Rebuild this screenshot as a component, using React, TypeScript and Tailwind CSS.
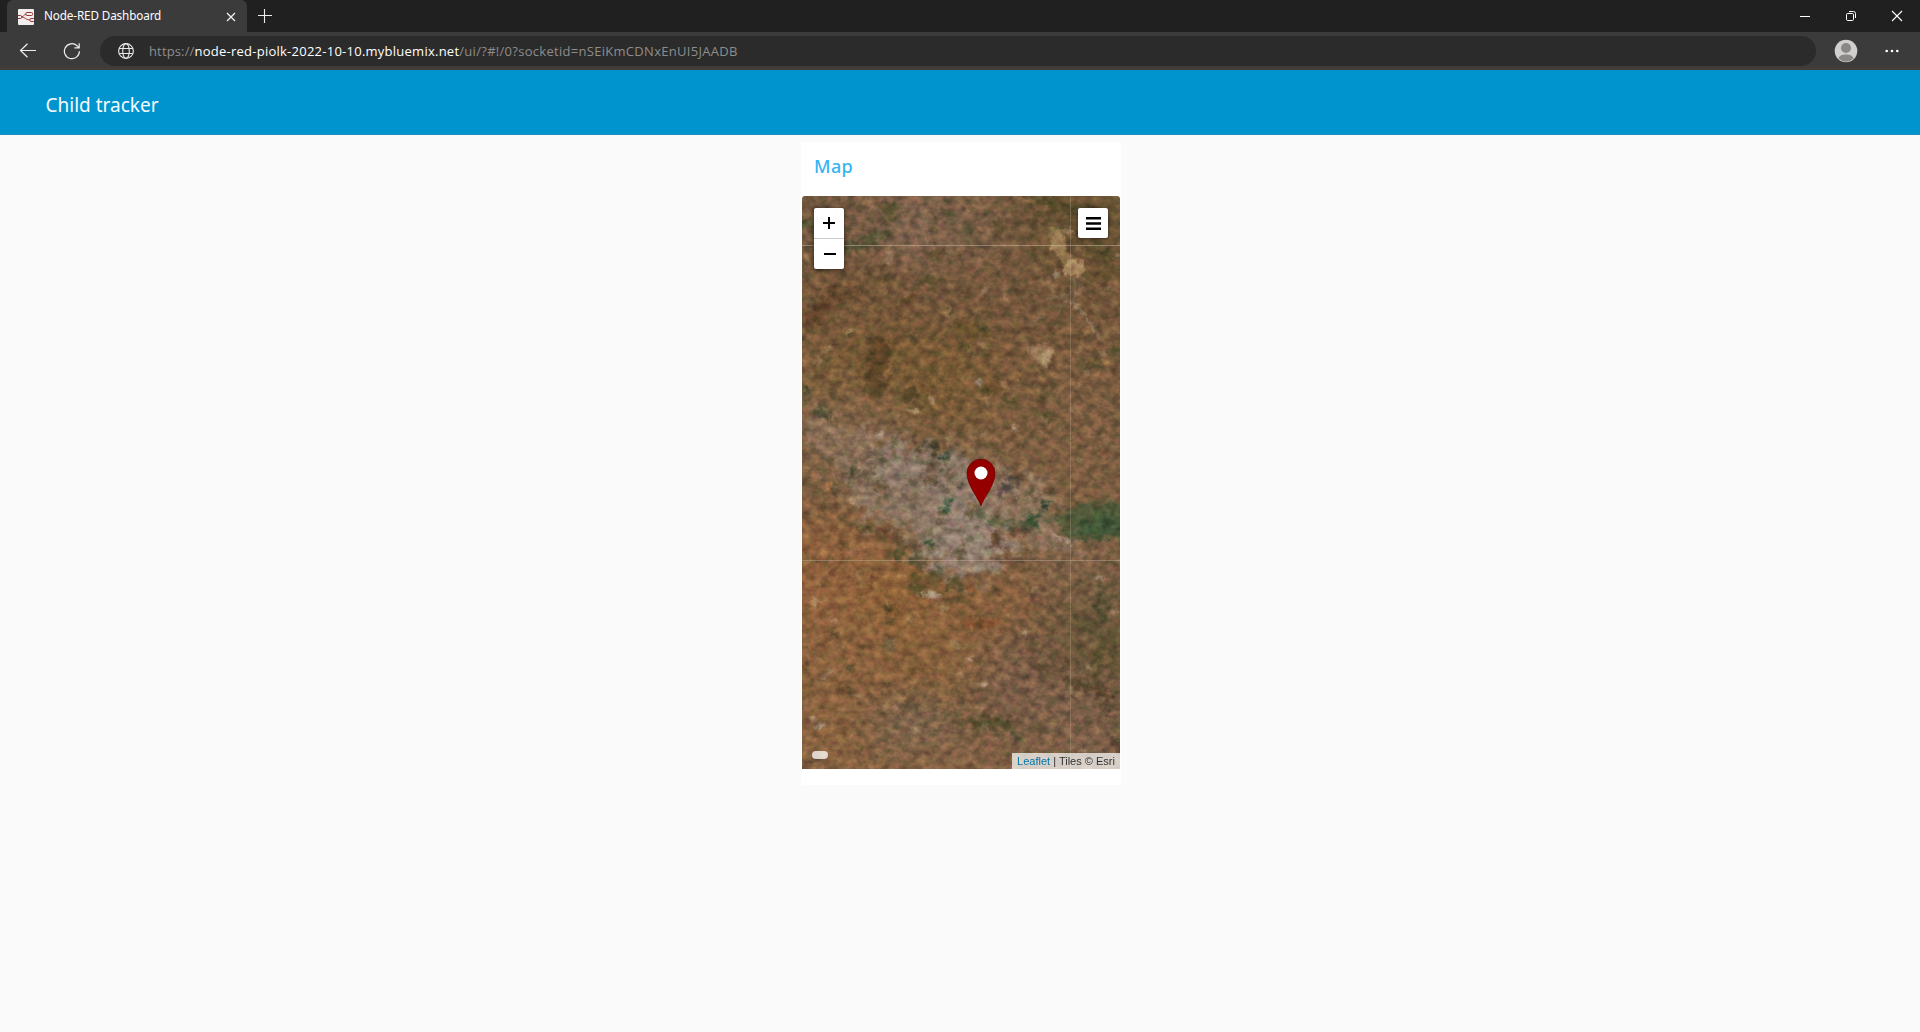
type Patch = [number, number, number, number, string, number, number?];

const BASE: Patch[] = [
  [40, 20, 90, 50, '#73573c', 0.9],
  [120, 30, 60, 50, '#81634a', 0.9],
  [190, 20, 60, 40, '#7b5d42', 0.8],
  [270, 20, 60, 60, '#68512f', 0.9],
  [60, 110, 80, 50, '#745433', 0.8],
  [180, 110, 80, 50, '#755537', 0.9],
  [285, 120, 50, 60, '#735435', 0.9],
  [120, 180, 120, 50, '#79592f', 0.9],
  [250, 190, 80, 50, '#7d5a39', 0.8],
  [50, 230, 60, 40, '#836343', 0.8],
  [280, 240, 60, 60, '#7d5c3d', 0.9],
  [30, 400, 80, 80, '#925f37', 0.95],
  [110, 430, 70, 70, '#926234', 0.95],
  [190, 420, 70, 50, '#8b5e38', 0.9],
  [40, 500, 70, 80, '#8c5f38', 0.9],
  [160, 470, 60, 40, '#8a6139', 0.9],
  [230, 500, 60, 70, '#7a5b43', 0.9],
  [290, 540, 60, 50, '#7c5d44', 0.9],
  [290, 430, 50, 60, '#6f5839', 0.9],
  [110, 530, 45, 30, '#786148', 0.9],
  [100, 565, 90, 16, '#91653e', 0.8],
  [190, 556, 60, 18, '#8a6243', 0.8],
  [280, 370, 60, 26, '#7f5f43', 0.8],
];

const CITY: Patch[] = [
  [80, 268, 60, 28, '#8e7660', 0.8, 15],
  [130, 292, 74, 42, '#8e7a68', 0.9, 10],
  [152, 336, 46, 38, '#94806e', 0.95, 15],
  [96, 312, 50, 22, '#8f765e', 0.8, 15],
  [212, 304, 44, 26, '#91765c', 0.8, 10],
  [172, 352, 42, 22, '#96816f', 0.95],
  [158, 380, 34, 8, '#8a7054', 0.6],
  [42, 252, 34, 14, '#8c6d51', 0.7, 30],
  [14, 230, 20, 14, '#987a60', 0.6, 40],
  [250, 342, 30, 12, '#967b64', 0.7, 15],
];

const DETAIL: Patch[] = [
  [88, 14, 9, 14, '#454822', 0.6, 25],
  [70, 44, 22, 6, '#434b2a', 0.65, -28],
  [38, 53, 28, 4, '#3b472c', 0.65, -8],
  [142, 17, 5, 11, '#4b4729', 0.6, 30],
  [166, 38, 12, 6, '#4e5030', 0.55, 55],
  [135, 58, 10, 6, '#5b4527', 0.6, -25],
  [200, 30, 7, 7, '#5a4424', 0.6],
  [4, 30, 7, 6, '#3b4b2a', 0.6],
  [255, 10, 25, 4, '#42401d', 0.7, 10],
  [300, 58, 15, 7, '#504724', 0.7, 35],
  [294, 78, 26, 7, '#57451f', 0.5, 0],
  [18, 115, 8, 22, '#5f3d22', 0.7, 40],
  [45, 98, 18, 5, '#5b4024', 0.65, -10],
  [105, 106, 14, 4, '#583e20', 0.6, -30],
  [85, 84, 22, 3, '#534821', 0.5, 8],
  [128, 86, 14, 4, '#49491d', 0.6, 10],
  [170, 135, 20, 8, '#614c22', 0.6, 20],
  [76, 172, 13, 32, '#523c1e', 0.65, 5],
  [80, 150, 10, 8, '#5d4321', 0.6],
  [110, 198, 10, 7, '#4a3e21', 0.8, -25],
  [22, 217, 12, 4, '#38452a', 0.75, 35],
  [3, 196, 4, 6, '#2c4225', 0.8],
  [190, 192, 12, 5, '#62471f', 0.6],
  [206, 205, 5, 4, '#3f4d20', 0.7],
  [244, 220, 14, 3, '#44491f', 0.6, 25],
  [246, 196, 14, 3, '#4a5428', 0.5, -45],
  [290, 168, 8, 5, '#474c23', 0.7],
  [314, 156, 8, 5, '#3e4a22', 0.7],
  [134, 251, 6, 7, '#463f27', 0.9],
  [117, 251, 6, 7, '#5a452b', 0.8],
  [142, 261, 4, 4, '#23402a', 0.9],
  [130, 272, 7, 5, '#655039', 0.9],
  [129, 284, 9, 5, '#5d4c34', 0.9],
  [148, 276, 5, 6, '#63503a', 0.8],
  [112, 285, 7, 4, '#65523b', 0.8],
  [50, 276, 4, 7, '#484a2b', 0.8],
  [62, 262, 6, 5, '#66523a', 0.7],
  [80, 263, 5, 5, '#5c5134', 0.7],
  [79, 293, 9, 6, '#635036', 0.85, 30],
  [84, 303, 6, 4, '#695540', 0.8],
  [66, 277, 8, 5, '#625039', 0.8],
  [100, 296, 5, 3, '#66533e', 0.7],
  [112, 308, 10, 4, '#6a5944', 0.6, -20],
  [210, 306, 6, 4, '#71503a', 0.7],
  [144, 310, 5, 7, '#34583a', 0.9],
  [170, 315, 6, 7, '#625135', 0.85],
  [206, 291, 13, 5, '#403a38', 0.7, -35],
  [192, 323, 2, 6, '#32542f', 0.9],
  [180, 318, 2, 8, '#365633', 0.7],
  [230, 325, 9, 9, '#2d4f30', 0.85],
  [244, 308, 5, 4, '#21432b', 0.95],
  [212, 329, 20, 2, '#36502d', 0.8, 3],
  [294, 325, 38, 19, '#435733', 0.8, -4],
  [302, 331, 28, 12, '#3a5532', 0.75, -4],
  [254, 321, 20, 2, '#3b5530', 0.7, 12],
  [310, 312, 12, 4, '#4b5f39', 0.7],
  [64, 332, 10, 3, '#46512a', 0.8, 15],
  [45, 326, 12, 2, '#5a5229', 0.6, 15],
  [86, 338, 12, 5, '#6c4529', 0.7],
  [95, 358, 7, 5, '#3c4b25', 0.85],
  [130, 347, 6, 4, '#35502e', 0.85],
  [106, 348, 13, 5, '#5b4c31', 0.7],
  [115, 363, 8, 8, '#535032', 0.8],
  [160, 355, 8, 4, '#56492f', 0.85],
  [194, 344, 6, 9, '#66452c', 0.8, 20],
  [216, 337, 14, 4, '#6b452b', 0.7],
  [208, 365, 16, 5, '#6c492e', 0.6],
  [136, 371, 3, 6, '#3b522d', 0.8],
  [115, 393, 13, 4, '#454823', 0.8, 15],
  [124, 384, 18, 8, '#5c4a26', 0.55],
  [152, 388, 9, 5, '#494523', 0.85],
  [160, 404, 7, 3, '#51571f', 0.7],
  [168, 394, 8, 3, '#7b461f', 0.7],
  [178, 428, 22, 5, '#764520', 0.6],
  [93, 416, 7, 5, '#6d4723', 0.7],
  [232, 400, 4, 8, '#5a3d36', 0.7],
  [300, 410, 6, 22, '#43482a', 0.6, 8],
  [290, 434, 28, 6, '#4c4a27', 0.5, 30],
  [297, 464, 4, 20, '#484721', 0.65, 12],
  [310, 460, 4, 26, '#4c4825', 0.5],
  [284, 490, 26, 4, '#483a21', 0.65, 15],
  [303, 500, 10, 3, '#3b2d1c', 0.75, 25],
  [308, 516, 6, 4, '#433427', 0.8],
  [240, 472, 14, 3, '#533d26', 0.6, 30],
  [258, 462, 5, 9, '#55402a', 0.5, -30],
  [225, 450, 5, 10, '#684531', 0.6],
  [192, 528, 24, 7, '#4b4823', 0.7, 4],
  [216, 541, 9, 5, '#4b522f', 0.65, 25],
  [172, 530, 6, 9, '#48441f', 0.5],
  [236, 531, 8, 3, '#4b4e25', 0.6],
  [40, 493, 8, 4, '#5f4926', 0.7, 35],
  [88, 448, 8, 6, '#5d5a3c', 0.6, 20],
  [30, 440, 3, 3, '#443c25', 0.9],
  [114, 473, 10, 4, '#6d4926', 0.6],
  [110, 504, 10, 6, '#5b4c30', 0.5],
  [316, 550, 6, 8, '#4c3728', 0.7],
];

const LIGHT: Patch[] = [
  [254, 39, 8, 7, '#a98456', 0.75],
  [256, 50, 7, 9, '#a98354', 0.75, -20],
  [265, 63, 6, 9, '#9d7c4c', 0.75, -30],
  [272, 72, 11, 8, '#af8a5b', 0.85],
  [265, 34, 6, 3, '#a3805c', 0.7],
  [280, 68, 3, 5, '#a28058', 0.8],
  [254, 79, 4, 2, '#ab927a', 0.8],
  [240, 157, 11, 9, '#b08a61', 0.75, 10],
  [233, 154, 8, 4, '#a28159', 0.7],
  [244, 164, 4, 7, '#b29369', 0.75],
  [48, 136, 6, 1.5, '#a59362', 0.8, -45],
  [27, 154, 6, 1.2, '#a59362', 0.7, -45],
  [146, 115, 2, 6, '#a68853', 0.7, 15],
  [112, 215, 8, 2, '#ac9165', 0.8, 8],
  [131, 204, 2, 4, '#ad9471', 0.7, -20],
  [177, 186, 3, 3, '#b6b0a0', 0.6],
  [212, 233, 2, 3, '#baa185', 0.8],
  [78, 238, 6, 3, '#b1967a', 0.7, -30],
  [130, 399, 11, 3, '#ad9880', 0.8, 3],
  [13, 406, 5, 4, '#c08e65', 0.9],
  [31, 425, 4, 3, '#b2825a', 0.8],
  [169, 463, 3, 2, '#c5a990', 0.7],
  [181, 488, 4, 2, '#ad9580', 0.7],
  [18, 530, 6, 3, '#ad957c', 0.8, -20],
  [11, 524, 4, 3, '#ad8b69', 0.8],
  [24, 478, 7, 3, '#a2835d', 0.7, -40],
  [298, 382, 5, 2, '#a59276', 0.7],
  [224, 438, 3, 4, '#a1806a', 0.7],
  [26, 291, 3, 5, '#bd7745', 0.8],
  [52, 306, 8, 3, '#aa8d6d', 0.6, 45],
  [258, 342, 10, 2.5, '#b39a85', 0.7, 20],
];

// Small scattered ground speckles, seeded so that every render is the same.
const SPECKLES: Patch[] = (() => {
  let s = 77;
  const rnd = () => (s = (s * 16807) % 2147483647) / 2147483647;
  const tones = ['#4c4a28', '#5b3f22', '#50502a', '#a98a66', '#9c7247', '#5a4a31', '#a87a48'];
  return Array.from({ length: 700 }, () => [
    rnd() * 318,
    rnd() * 573,
    1 + rnd() * 5,
    1 + rnd() * 3,
    tones[Math.floor(rnd() * tones.length)],
    0.2 + rnd() * 0.3,
    rnd() * 180,
  ] as Patch);
})();

function Patches({ items }: { items: Patch[] }) {
  return (
    <>
      {items.map(([x, y, rx, ry, fill, o, r = 0], i) => (
        <ellipse key={i} rx={rx} ry={ry} fill={fill} opacity={o} transform={`translate(${x} ${y}) rotate(${r})`} />
      ))}
    </>
  );
}

function SatelliteMap() {
  return (
    <svg width="318" height="573" viewBox="0 0 318 573" className="block">
      <defs>
        <filter id="soft" x="-20" y="-20" width="358" height="613" filterUnits="userSpaceOnUse" colorInterpolationFilters="sRGB">
          <feGaussianBlur stdDeviation="18" />
        </filter>
        <filter id="rough" x="-20" y="-20" width="358" height="613" filterUnits="userSpaceOnUse" colorInterpolationFilters="sRGB">
          <feGaussianBlur stdDeviation="2" result="b" />
          <feTurbulence type="fractalNoise" baseFrequency="0.14" numOctaves="4" seed="8" />
          <feDisplacementMap in="b" scale="17" xChannelSelector="R" yChannelSelector="G" />
        </filter>
        <filter id="city" x="-20" y="-20" width="358" height="613" filterUnits="userSpaceOnUse" colorInterpolationFilters="sRGB">
          <feGaussianBlur stdDeviation="7" result="b" />
          <feTurbulence type="fractalNoise" baseFrequency="0.09" numOctaves="4" seed="3" />
          <feDisplacementMap in="b" scale="55" xChannelSelector="R" yChannelSelector="G" />
        </filter>
        <filter id="fine" x="-20" y="-20" width="358" height="613" filterUnits="userSpaceOnUse" colorInterpolationFilters="sRGB">
          <feGaussianBlur stdDeviation="0.8" result="b" />
          <feTurbulence type="fractalNoise" baseFrequency="0.2" numOctaves="3" seed="5" />
          <feDisplacementMap in="b" scale="8" xChannelSelector="R" yChannelSelector="G" />
        </filter>
        <filter id="grain" x="0" y="0" width="318" height="573" filterUnits="userSpaceOnUse" colorInterpolationFilters="sRGB">
          <feTurbulence type="fractalNoise" baseFrequency="0.11 0.13" numOctaves="5" seed="21" />
          <feColorMatrix values="1.1 0.2 0 0 -0.14  0.8 0.5 0 0 -0.14  0.9 0.2 0.2 0 -0.12  0 0 0 0 1" />
        </filter>
      </defs>
      <g className="saturate-[0.9]">
        <rect width="318" height="573" fill="#7c5c3b" />
        <g filter="url(#soft)"><Patches items={BASE} /></g>
        <g filter="url(#city)"><Patches items={CITY} /></g>
        <g filter="url(#rough)"><Patches items={DETAIL} /></g>
        <g filter="url(#fine)">
          <Patches items={SPECKLES} />
          <Patches items={LIGHT} />
          <g fill="none" stroke="#9b8469" strokeWidth="1.6" opacity=".7">
            <path d="M267 103 L280 115 L290 130 L298 145" stroke="#a89577" strokeWidth="2" />
            <path d="M280 80 L278 94 L271 101 M273 82 L271 99 M245 102 L268 99 M268 103 L255 116" />
            <path d="M134 342 Q148 333 164 332 L186 322" stroke="#716050" strokeWidth="1.2" />
            <path d="M58 380 L95 356 M190 326 L230 332" stroke="#7b6a50" strokeWidth="1" />
          </g>
        </g>
        <rect width="318" height="573" filter="url(#grain)" className="mix-blend-overlay" opacity=".38" />
      </g>
      <path d="M0 49.5H318" stroke="#c9b9a3" opacity=".5" />
      <path d="M0 364.5H318" stroke="#c9b9a3" opacity=".4" />
      <path d="M268.5 0V573" stroke="#c0ac92" opacity=".3" />
      <path
        d="M179 309.7 C177 303 165 289 165 277.2 A14 14 0 0 1 193 277.2 C193 289 181 303 179 309.7Z"
        fill="#940000"
        stroke="#720000"
        strokeWidth=".8"
      />
      <circle cx="179" cy="277" r="6.5" fill="#fff" />
    </svg>
  );
}

function NodeRedIcon() {
  return (
    <svg width="16" height="16" viewBox="0 0 16 16" className="mt-px shrink-0">
      <rect width="16" height="16" rx="1" fill="#f3eeee" />
      <g fill="none" stroke="#97353a" strokeWidth="1">
        <rect x="8" y="3.5" width="6.5" height="3" rx="1" />
        <rect x="12" y="9.5" width="4.5" height="3" rx="1" />
        <rect x="-1" y="6.5" width="4.5" height="3" rx="1" />
        <path d="M3.5 8C6 8 6 5 8 5M3.5 8C7.5 8 7.5 11 12 11" />
      </g>
    </svg>
  );
}

function TabStrip() {
  return (
    <div className="flex h-8 bg-[#202020]">
      <div className="ml-[7px] flex w-60 items-center rounded-t-md bg-[#3b3b3b] pl-[11px] pr-[11px]">
        <NodeRedIcon />
        <span className="ml-[10px] whitespace-nowrap text-[11.7px] tracking-[-0.12px] text-white">Node-RED Dashboard</span>
        <svg width="10" height="10" viewBox="0 0 10 10" className="ml-auto mt-px" stroke="#f0f0f0" strokeWidth="1.3">
          <path d="M1 1l8 8M9 1l-8 8" />
        </svg>
      </div>
      <svg width="14" height="14" viewBox="0 0 14 14" className="ml-[11px] mt-[9px]" stroke="#eee" strokeWidth="1.1">
        <path d="M0 6.5h14M6.5 0v14" />
      </svg>
      <div className="ml-auto flex pr-[17px] pt-[10px]">
        <svg width="12" height="12" viewBox="0 0 12 12" stroke="#fff" strokeWidth="1"><path d="M1 6.5h10" /></svg>
        <svg width="12" height="12" viewBox="0 0 12 12" className="ml-[34px]" fill="none" stroke="#fff" strokeWidth="1">
          <rect x="1.5" y="3.5" width="7" height="7" rx="1.2" />
          <path d="M4 1.5h4.5a2 2 0 0 1 2 2V8" />
        </svg>
        <svg width="12" height="12" viewBox="0 0 12 12" className="ml-[34px]" stroke="#fff" strokeWidth="1.1"><path d="M1 1l10 10M11 1L1 11" /></svg>
      </div>
    </div>
  );
}

function Toolbar() {
  return (
    <div className="flex h-[38px] items-start border-b-[3px] border-[#453c38] bg-[#3b3b3b] pt-1">
      <svg width="18" height="16" viewBox="0 0 18 16" className="ml-[19px] mt-[7px]" fill="none" stroke="#eee" strokeWidth="1.2">
        <path d="M17 7.5H1.5M8.5 .7L1.5 7.5l7 6.8" />
      </svg>
      <svg width="18" height="18" viewBox="0 0 18 18" className="ml-[26px] mt-[6px]" fill="none" stroke="#eee" strokeWidth="1.2">
        <path d="M16.4 9.2A7.5 7.5 0 1 1 14 3.7L16 5.7M16.2 1.2v4.7h-4.8" />
      </svg>
      <div className="ml-[19px] flex h-[30px] w-[1716px] items-center rounded-full bg-[#2b2b2b] pl-[18px]">
        <svg width="16" height="16" viewBox="0 0 16 16" fill="none" stroke="#e8e8e8" strokeWidth="1.1">
          <circle cx="8" cy="8" r="7.4" />
          <ellipse cx="8" cy="8" rx="3.3" ry="7.4" />
          <path d="M1.2 5.5h13.6M1.2 10.5h13.6" />
        </svg>
        <div className="ml-[15px] flex whitespace-nowrap pt-[2px] font-['Open_Sans',sans-serif] text-[13px] text-[#8d8d8d]">
          <span className="tracking-[0.14px]">https://</span>
          <span className="tracking-[0.25px] text-white">node-red-piolk-2022-10-10.mybluemix.net</span>
          <span className="tracking-[0.29px]">/ui/?#!/0?socketid=nSEiKmCDNxEnUI5JAADB</span>
        </div>
      </div>
      <svg width="24" height="24" viewBox="0 0 24 24" className="ml-[18px] mt-[3px]">
        <circle cx="12" cy="12" r="11.3" fill="#d2d0ce" />
        <circle cx="12" cy="9" r="5" fill="#8a8886" />
        <path d="M4.5 19.5C5.5 16.5 8.5 15.6 12 15.6s6.5.9 7.5 3.9A11 11 0 0 1 12 22.7a11 11 0 0 1-7.5-3.2Z" fill="#8a8886" />
      </svg>
      <svg width="14" height="4" viewBox="0 0 14 4" className="ml-[27px] mt-[13px]" fill="#fff">
        <circle cx="1.7" cy="2" r="1.3" /><circle cx="7" cy="2" r="1.3" /><circle cx="12.3" cy="2" r="1.3" />
      </svg>
    </div>
  );
}

function MapCard() {
  return (
    <section className="mx-auto mt-[7px] flex h-[643px] w-80 translate-x-px flex-col items-center bg-white">
      <h2 className="flex h-[54px] w-full items-start pl-[13px] pt-[10px] text-[18px] font-medium leading-[28px] tracking-[0.4px] text-[#36b4f0]">Map</h2>
      <div className="relative h-[573px] w-[318px] overflow-hidden rounded-t-[3px]">
        <SatelliteMap />
        <div className="absolute left-3 top-3 flex h-[61px] w-[30px] flex-col overflow-hidden rounded-[2px] bg-white shadow-[0_1px_5px_rgba(0,0,0,0.65)]">
          <button className="flex h-[31px] items-center justify-center border-b border-[#ccc]">
            <svg width="12" height="12" viewBox="0 0 12 12" stroke="#000" strokeWidth="2"><path d="M0 6h12M6 0v12" /></svg>
          </button>
          <button className="flex h-[30px] items-center justify-center pl-[2px]">
            <svg width="12" height="2" viewBox="0 0 12 2"><rect width="12" height="2" /></svg>
          </button>
        </div>
        <button className="absolute right-3 top-3 flex size-[30px] items-center justify-center rounded-[2px] bg-white shadow-[0_1px_5px_rgba(0,0,0,0.65)]">
          <svg width="15" height="13" viewBox="0 0 15 13" className="mt-px"><path d="M0 0h15v2.5H0zM0 5.2h15v2.5H0zM0 10.4h15v2.5H0z" /></svg>
        </button>
        <div className="absolute bottom-[10px] left-[10px] h-2 w-4 rounded-[4px] bg-white/75" />
        <div className="absolute bottom-0 right-0 flex h-4 w-[108px] items-center justify-center whitespace-pre bg-white/70 font-['Liberation_Sans',sans-serif] text-[11px] text-[#333]">
          <span className="text-[#0078a8]">Leaflet</span> | Tiles © Esri
        </div>
      </div>
    </section>
  );
}

export default function App() {
  return (
    <div className="flex h-[1032px] w-[1920px] flex-col overflow-hidden bg-[#fafafa] font-['Noto_Sans',sans-serif]">
      <TabStrip />
      <Toolbar />
      <header className="flex h-[65px] items-center border-b border-[#1c8fbd] bg-[#0094ce] pl-[45.5px] pt-1.5 text-[19px] text-[#f4fbff]">
        <h1>Child tracker</h1>
      </header>
      <MapCard />
    </div>
  );
}
